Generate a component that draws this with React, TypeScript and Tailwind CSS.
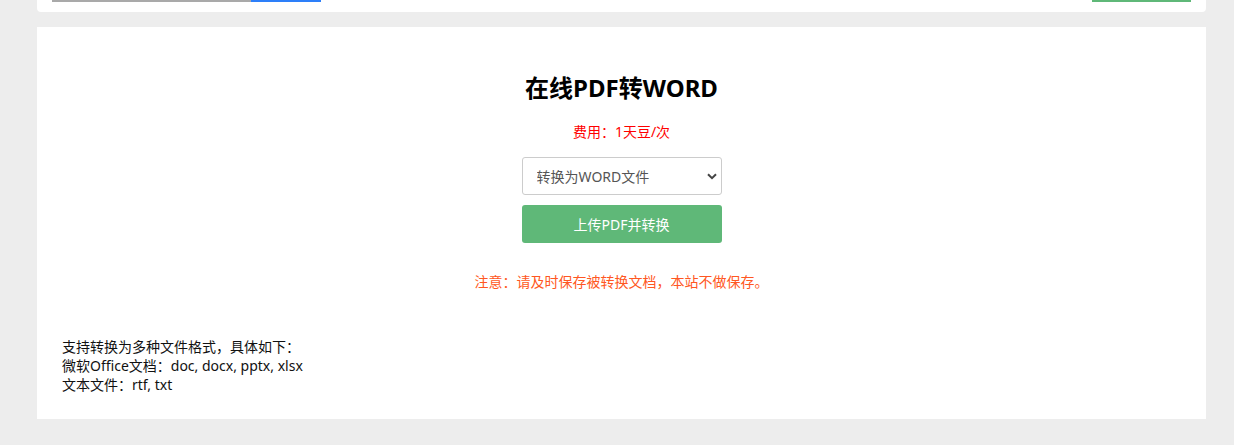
import React from "react";

const font = { fontFamily: '"Microsoft YaHei", "Noto Sans", "Noto Sans CJK SC", sans-serif' };

function TopBar() {
  return (
    <div className="flex h-[12px] items-start justify-between rounded-b-[4px] bg-white px-[15px]">
      <div className="flex">
        <div className="h-[2px] w-[199px] bg-[#a9a9a9]" />
        <div className="h-[2px] w-[70px] bg-[#2d7ff9]" />
      </div>
      <div className="h-[2px] w-[99px] bg-[#5fb878]" />
    </div>
  );
}

function Chevron() {
  return (
    <svg width="10" height="7" viewBox="0 0 10 7" className="pointer-events-none absolute right-[5px] top-[16px]">
      <path d="M1 1.2 L5 5.2 L9 1.2" fill="none" stroke="#444" strokeWidth="2" />
    </svg>
  );
}

export default function App() {
  return (
    <div className="min-h-[445px] bg-[#ededed] px-[37px] pr-[28px]" style={font}>
      <TopBar />
      <div className="mt-[15px] flex h-[392px] flex-col bg-white px-[25px] pt-[45px]">
        <h1 className="text-center text-[24px] font-bold leading-[32px] text-black">在线PDF转WORD</h1>
        <p className="mt-[18px] text-center text-[14px] leading-[20px] text-[#ff0000]">费用：1天豆/次</p>
        <div className="mt-[15px] flex flex-col items-center gap-[10px]">
          <div className="relative w-[200px]">
            <select
              className="h-[38px] w-full appearance-none rounded-[3px] border border-[#cccccc] bg-white pl-[14px] text-[14px] text-[#555] outline-none"
              defaultValue="word"
            >
              <option value="word">转换为WORD文件</option>
            </select>
            <Chevron />
          </div>
          <button className="h-[38px] w-[200px] rounded-[3px] bg-[#5fb878] text-[14px] text-white">
            上传PDF并转换
          </button>
        </div>
        <p className="mt-[29px] text-center text-[14px] leading-[20px] text-[#ff5722]">
          注意：请及时保存被转换文档，本站不做保存。
        </p>
        <div className="mt-[45px] text-[14px] leading-[19px] text-[#111]">
          <p>支持转换为多种文件格式，具体如下：</p>
          <p>微软Office文档：doc, docx, pptx, xlsx</p>
          <p>文本文件：rtf, txt</p>
        </div>
      </div>
    </div>
  );
}
